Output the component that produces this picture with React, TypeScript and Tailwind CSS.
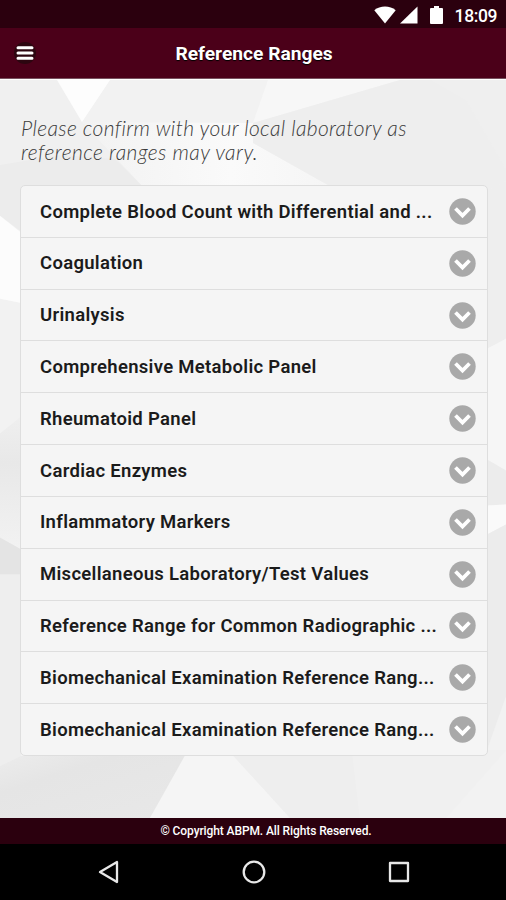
const sections = [
  'Complete Blood Count with Differential and ...',
  'Coagulation',
  'Urinalysis',
  'Comprehensive Metabolic Panel',
  'Rheumatoid Panel',
  'Cardiac Enzymes',
  'Inflammatory Markers',
  'Miscellaneous Laboratory/Test Values',
  'Reference Range for Common Radiographic ...',
  'Biomechanical Examination Reference Rang...',
  'Biomechanical Examination Reference Rang...',
];

const StatusBar = () => {
  return (
    <div className="flex h-7 items-center justify-end bg-[#2b000e] pr-[9px] text-white">
      <svg className="translate-y-px" width="22" height="18" viewBox="0 0 22 18" fill="currentColor">
        <path d="M11 17.5 0.3 4.2C3.2 1.8 7 0.6 11 0.6s7.800 1.200 10.700 3.600z" />
      </svg>
      <svg className="ml-1 translate-y-px" width="18" height="18" viewBox="0 0 18 18" fill="currentColor">
        <path d="M0 17.500 17.500 0.500v17z" />
      </svg>
      <svg className="ml-3 translate-y-px" width="13" height="18" viewBox="0 0 13 18" fill="currentColor">
        <path d="M4 0h5v2h3q1 0 1 1v14q0 1-1 1H1q-1 0-1-1V3q0-1 1-1h3z" />
      </svg>
      <span className="ml-3 pt-1 text-[17.500px] leading-6 font-medium tracking-[-0.400px]">18:09</span>
    </div>
  );
};

const Header = () => {
  return (
    <header className="grid h-[51px] grid-cols-[48px_1fr_46px] items-center border-b border-[#795260] bg-[#4b0019]">
      <button className="ml-3.5 flex size-[22px] items-center justify-center rounded-full bg-[#2c0610]">
        <svg width="18" height="14" viewBox="0 0 18 14" stroke="#fff" strokeWidth="3" strokeLinecap="round">
          <path d="M2 1.700h14M2 7h14M2 12.300h14" />
        </svg>
      </button>
      <h1 className="pt-0.5 text-center text-[19.200px] font-bold text-white [text-shadow:0_1px_1px_#000]">
        Reference Ranges
      </h1>
    </header>
  );
};

// Pale polygon wallpaper behind the list
const Facets = () => {
  return (
    <svg
      className="absolute inset-0 h-full w-full"
      viewBox="0 79 506 739"
      preserveAspectRatio="none"
    >
      <defs>
        <linearGradient id="shade" x1="0" y1="0" x2="0" y2="1">
          <stop offset="0" stopColor="#efefef" />
          <stop offset="0.350" stopColor="#e8e8e8" />
          <stop offset="1" stopColor="#f2f2f2" />
        </linearGradient>
        <linearGradient id="floor" x1="0" y1="0" x2="1" y2="1">
          <stop offset="0" stopColor="#ececec" />
          <stop offset="0.300" stopColor="#e5e5e5" />
          <stop offset="1" stopColor="#e8e8e8" />
        </linearGradient>
        <linearGradient id="glow" x1="0" y1="0" x2="1" y2="0">
          <stop offset="0" stopColor="#f2f2f2" />
          <stop offset="0.600" stopColor="#fafafa" />
          <stop offset="1" stopColor="#f5f5f5" />
        </linearGradient>
      </defs>
      <path fill="#f2f2f2" d="M0 79h506v739H0z" />
      <path fill="#f0f0f0" d="M0 79h57l25 42 61 65H0z" />
      <path fill="#ececec" d="M0 164 60 154 115 158 143 186 20 230 0 215z" />
      <path fill="#fdfdfd" d="M57 79h53L82 121z" />
      <path fill="#f7f7f7" d="M253 122 400 79H268z" />
      <path fill="url(#glow)" d="M82 121 253 122v20l78 44H143z" />
      <path fill="#eeeeee" d="M253 122 400 79h106v101l-18 10-157-4-78-44z" />
      <path fill="#f1f1f1" d="M431 79h75v90l-40-70z" opacity="0.400" />
      <path fill="#fcfcfc" d="M0 215 20 231v71L0 298z" />
      <path fill="url(#shade)" d="M0 433 21 416v133L0 537z" />
      <path fill="#e4e4e4" d="M0 537 21 549v26H0z" />
      <path fill="#eeeeee" d="M0 574h21v183L0 766z" />
      <path fill="url(#floor)" d="M0 766 21 756H188L150 818H0z" />
      <path fill="#f5f5f5" d="M188 750h40l62 68H150z" />
      <path fill="#eeeeee" d="M228 750h124l8 68h-70z" />
      <path fill="#f0f0f0" d="M352 750h154l-60 68h-86z" />
      <path fill="#eeeeee" d="M487 190 506 180v158l-19 10z" />
      <path fill="#f6f6f6" d="M487 348 506 338v132l-19-11z" />
      <path fill="#ececec" d="M487 459 506 470v34l-19 1z" />
      <path fill="#fafafa" d="M487 505 506 504v20l-19 10z" />
      <path fill="#ececec" d="M487 534 506 524v172l-19 54z" />
    </svg>
  );
};

const SectionRow = ({ title }: { title: string }) => {
  return (
    <li className="flex min-h-0 flex-1 items-center justify-between border-b border-[#dedede] pr-[11px] pl-[19px] last:border-b-0">
      <span className="pt-0.5 text-[18.500px] font-semibold tracking-[0.300px] whitespace-nowrap text-[#1b1b1b]">
        {title}
      </span>
      <svg className="shrink-0" width="27" height="27" viewBox="0 0 27 27" fill="none">
        <circle cx="13.500" cy="13.500" r="13.200" fill="#a9a9a9" />
        <path d="m6.500 10.500 7 7 7-7" stroke="#fff" strokeWidth="3.800" />
      </svg>
    </li>
  );
};

export default function App() {
  return (
    <div className="flex h-[900px] w-[506px] flex-col overflow-hidden bg-black font-['Roboto',sans-serif]">
      <StatusBar />
      <Header />

      <main className="relative h-[739px] overflow-hidden border-t border-white">
        <Facets />
        <div className="relative pt-9 pr-[18px] pl-5">
          <p className="pl-px font-['Lato',sans-serif] text-[21px] leading-6 font-light tracking-[0.360px] text-[#3c3c3c] italic">
            Please confirm with your local laboratory as
            <br />
            <span className="tracking-[0.450px]">reference ranges may vary.</span>
          </p>
          <ul className="mt-[21px] flex h-[571px] flex-col rounded-[5px] border border-[#dedede] bg-[#f5f5f5]">
            {sections.map((title, index) => (
              <SectionRow key={index} title={title} />
            ))}
          </ul>
        </div>
      </main>

      {/* Copyright strip */}
      <footer className="flex h-[26px] items-center justify-center bg-[#2b000e] pl-[26px] text-[12px] font-medium tracking-[-0.100px] text-white">
        © Copyright ABPM. All Rights Reserved.
      </footer>

      {/* Android navigation */}
      <nav className="grid h-14 grid-cols-[109px_auto_auto_auto_1fr] items-center bg-black">
        <span />
        <svg className="-ml-3" width="24" height="24" viewBox="0 0 24 24" fill="none" stroke="#e8e8e8" strokeWidth="2.300" strokeLinejoin="round">
          <path d="M20 2v20L3 12z" />
        </svg>
        <svg className="ml-[121px]" width="24" height="24" viewBox="0 0 24 24" fill="none" stroke="#e8e8e8" strokeWidth="2.300">
          <circle cx="12" cy="12" r="10.300" />
        </svg>
        <svg className="ml-[121px]" width="24" height="24" viewBox="0 0 24 24" fill="none" stroke="#e8e8e8" strokeWidth="2.300" strokeLinejoin="round">
          <path d="M3 3h18v18H3z" />
        </svg>
      </nav>
    </div>
  );
}
